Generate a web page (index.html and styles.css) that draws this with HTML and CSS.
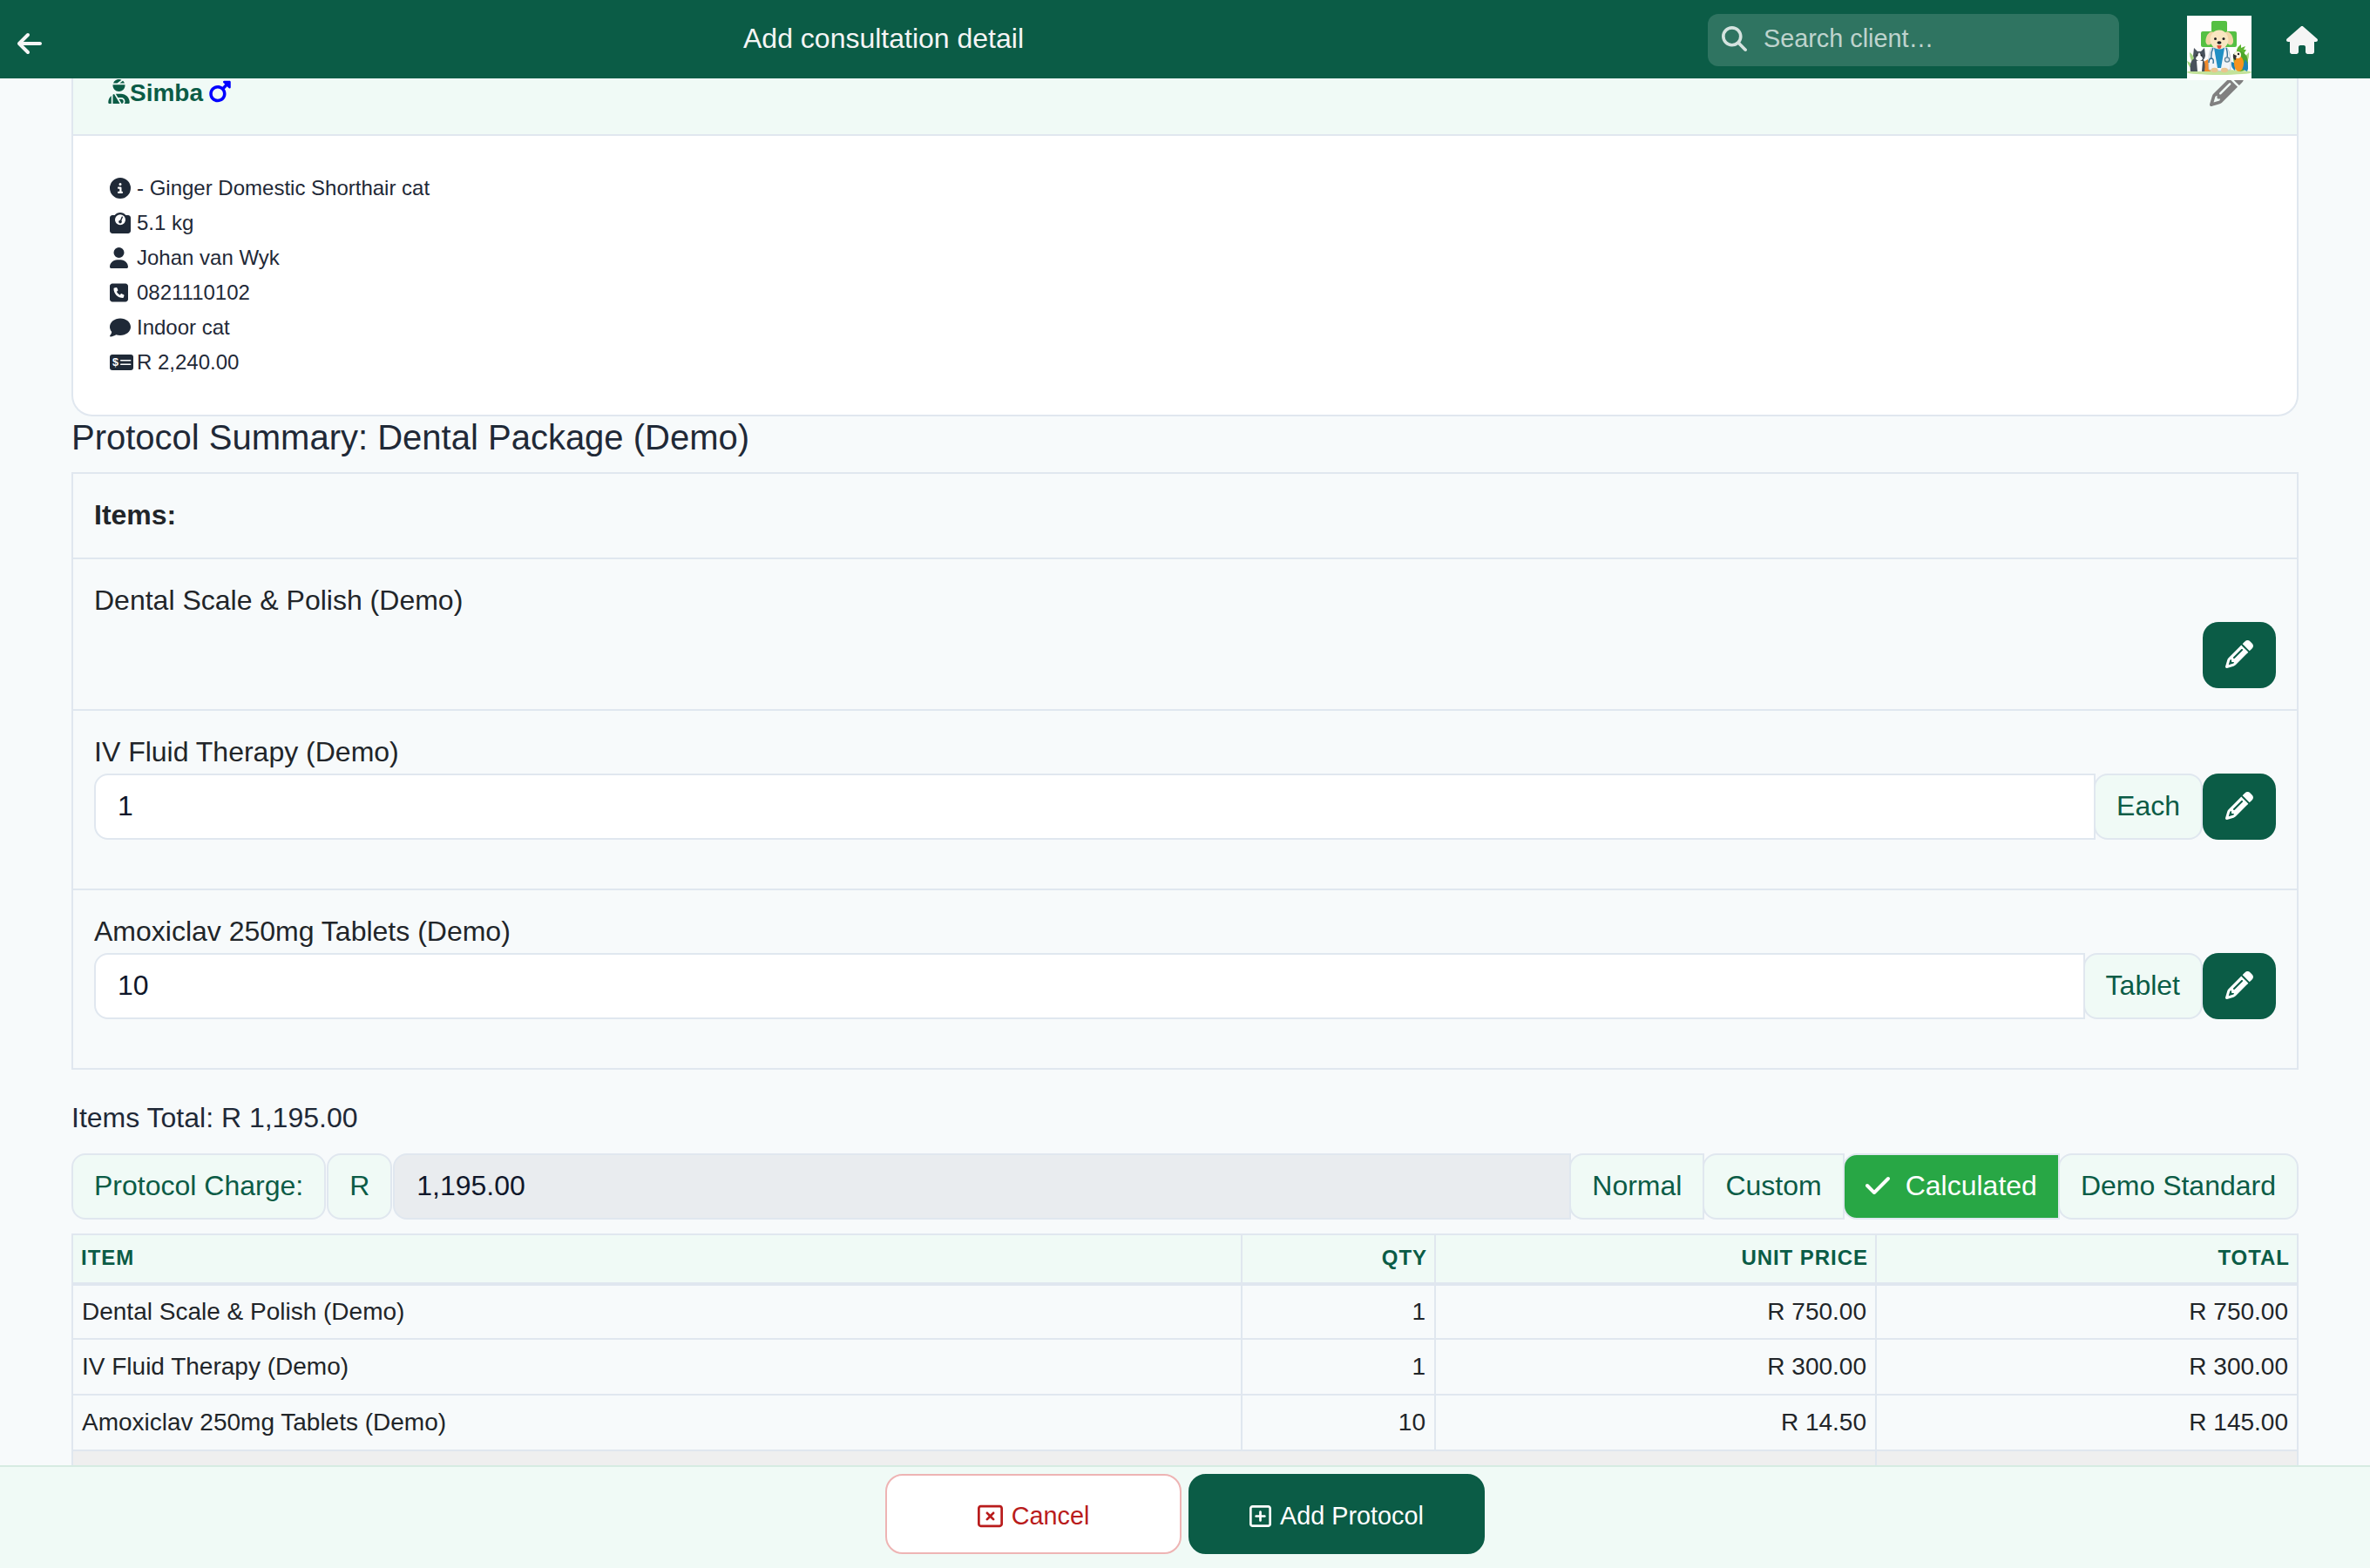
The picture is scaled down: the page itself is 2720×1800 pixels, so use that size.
FILE: index.html
```html
<!DOCTYPE html>
<html lang="en">
<head>
    <meta charset="UTF-8">
    <meta name="viewport" content="width=device-width, initial-scale=1.0">
    <title>Add consultation detail</title>
    <link rel="stylesheet" href="styles.css">
</head>
<body>
    <svg class="sprite" aria-hidden="true">
        <symbol id="pencil" viewBox="0 0 512 512">
            <path d="M410.3 231l11.3-11.3-33.9-33.9-62.1-62.1L291.7 89.8l-11.3 11.3-22.6 22.6L58.6 322.9c-10.4 10.4-18 23.3-22.2 37.4L1 480.7c-2.5 8.4-.2 17.5 6.1 23.7s15.3 8.5 23.7 6.1l120.3-35.4c14.1-4.2 27-11.8 37.4-22.2L387.7 253.7 410.3 231zM160 399.4l-9.1 22.7c-4 3.1-8.5 5.4-13.3 6.9L59.4 452l23-78.1c1.4-4.9 3.8-9.4 6.9-13.3l22.7-9.1 0 32c0 8.8 7.2 16 16 16l32 0zM362.7 18.7L348.3 33.2 325.7 55.8 314.3 67.1l33.9 33.9 62.1 62.1 33.9 33.9 11.3-11.3 22.6-22.6 14.5-14.5c25-25 25-65.5 0-90.5L453.3 18.7c-25-25-65.5-25-90.5 0zm-47.4 168l-144 144c-6.2 6.2-16.4 6.2-22.6 0s-6.2-16.4 0-22.6l144-144c6.2-6.2 16.4-6.2 22.6 0s6.2 16.4 0 22.6z"/>
        </symbol>
    </svg>

    <header class="topbar">
        <svg class="back" viewBox="0 0 448 512"><path d="M9.4 233.4c-12.5 12.5-12.5 32.8 0 45.3l160 160c12.5 12.5 32.8 12.5 45.3 0s12.5-32.8 0-45.3L109.2 288 416 288c17.7 0 32-14.3 32-32s-14.3-32-32-32l-306.7 0L214.6 118.6c12.5-12.5 12.5-32.8 0-45.3s-32.8-12.5-45.3 0l-160 160z"/></svg>
        <div class="title">Add consultation detail</div>
        <div class="search">
            <svg viewBox="0 0 512 512"><path d="M416 208c0 45.9-14.9 88.3-40 122.7L502.6 457.4c12.5 12.5 12.5 32.8 0 45.3s-32.8 12.5-45.3 0L330.7 376c-34.4 25.2-76.8 40-122.7 40C93.1 416 0 322.9 0 208S93.1 0 208 0S416 93.1 416 208zM208 352a144 144 0 1 0 0-288 144 144 0 1 0 0 288z"/></svg>
            <span>Search client…</span>
        </div>
        <svg class="logo" viewBox="0 0 74 74">
            <rect width="74" height="74" fill="#fefefe"/>
            <path d="M30 6h14q2 0 2 2v10h9q2 0 2 2v14q0 2-2 2H18q-2 0-2-2V20q0-2 2-2h10V8q0-2 2-2z" fill="#55c043"/>
            <ellipse cx="37" cy="65" rx="37" ry="3" fill="#c3e29a"/>
            <path d="M3 42q6 4 7 16-7-6-7-16zM0 52q6 2 8 10-6-2-8-10zM71 42q-6 5-6 15 7-5 6-15z" fill="#a5d67f"/>
            <path d="M19 53l5-3 3 14h-8z" fill="#f08a2c"/>
            <!-- cat -->
            <path d="M4 64q-2-14 7-16h6q5 5 3 16z" fill="#49525c"/>
            <path d="M8 37l4 4h4l4-4 1 9q-1 6-7 6t-7-6z" fill="#49525c"/>
            <path d="M14 42l4 7q-1 3-4 3t-4-3zM11 52h7l-1 12h-5z" fill="#fff"/>
            <circle cx="11.5" cy="45.500" r="1" fill="#222"/><circle cx="16.500" cy="45.500" r="1" fill="#222"/>
            <!-- dog in a white coat -->
            <path d="M28 37q9-2 18 0 5 6 4 25-13 3-25 0-1-19 3-25z" fill="#f0f4f7" stroke="#b3c0ca" stroke-width=".8"/>
            <path d="M31 37h12l-4 23h-4z" fill="#1f8fc4"/>
            <path d="M30 37q-3 6-2 13M25 54q0-5 3-5t2 6M45 37q2 6 1 11" fill="none" stroke="#2f6f98" stroke-width="1.4"/>
            <circle cx="46" cy="50.500" r="2.600" fill="#dfe8ee" stroke="#5f8298" stroke-width="1.2"/>
            <ellipse cx="31.500" cy="62.500" rx="4" ry="2.800" fill="#e9c48e"/><ellipse cx="43" cy="62.500" rx="4" ry="2.800" fill="#e9c48e"/>
            <ellipse cx="26.500" cy="26" rx="4.500" ry="8" fill="#f1d5a6" transform="rotate(22 26.500 26)"/>
            <ellipse cx="48" cy="26" rx="4.500" ry="8" fill="#f1d5a6" transform="rotate(-22 48 26)"/>
            <ellipse cx="37" cy="27.500" rx="10.500" ry="11" fill="#f9e6c1"/>
            <circle cx="32.500" cy="26.500" r="1.500" fill="#222"/><circle cx="42" cy="26.500" r="1.500" fill="#222"/>
            <ellipse cx="37" cy="31" rx="2.500" ry="1.800" fill="#222"/>
            <path d="M34.500 34h5q0 4-2.500 4t-2.500-4z" fill="#e5533f"/>
            <!-- parrot -->
            <path d="M57 41q0-5 5-8l0 4 5-2-2 4 3 0-3 5z" fill="#5cb531"/>
            <path d="M53 45q3-6 9-4 8 3 8 13 0 9-9 10-8-3-8-19z" fill="#4ba62b"/>
            <path d="M67 50q5 7 2 14l-6-3z" fill="#1d83b5"/>
            <path d="M51 53q-1 7 4 10l2-8z" fill="#1d83b5"/>
            <ellipse cx="59.500" cy="55" rx="5.500" ry="9" fill="#f6931e"/>
            <circle cx="58" cy="45" r="4" fill="#fdf3e2"/><circle cx="59" cy="44" r="1.200" fill="#222"/>
            <path d="M53 44q-1 6 3 7 0-3 1-5z" fill="#333"/>
        </svg>
        <svg class="home" viewBox="0 0 576 512"><path d="M575.8 255.5c0 18-15 32.1-32 32.1l-32 0 .7 160.2c0 2.7-.2 5.4-.5 8.1l0 16.2c0 22.1-17.9 40-40 40l-16 0c-1.1 0-2.2 0-3.3-.1c-1.4 .1-2.8 .1-4.2 .1L416 512l-24 0c-22.1 0-40-17.9-40-40l0-24 0-64c0-17.7-14.3-32-32-32l-64 0c-17.7 0-32 14.3-32 32l0 64 0 24c0 22.1-17.9 40-40 40l-24 0-31.9 0c-1.5 0-3-.1-4.5-.2c-1.2 .1-2.4 .2-3.6 .2l-16 0c-22.1 0-40-17.9-40-40l0-112c0-.9 0-1.9 .1-2.8l0-69.7-32 0c-18 0-32-14-32-32.1c0-9 3-17 10-24L266.4 8c7-7 15-8 22-8s15 2 21 7L564.8 231.5c8 7 12 15 11 24z"/></svg>
    </header>

    <main class="page">
        <section class="card">
            <div class="card-header">
                <svg class="w-448" viewBox="0 0 448 512"><path d="M240 80l102.7 0c-7.9-19.5-20.4-36.5-36.2-49.9L240 80zm37.7-68.2C261.3 4.2 243.2 0 224 0c-53.7 0-99.7 33.1-118.7 80l81.4 0 91-68.2zM224 256c70.7 0 128-57.3 128-128c0-5.4-.3-10.8-1-16L97 112c-.7 5.2-1 10.6-1 16c0 70.7 57.3 128 128 128zM124 312.4c-9.7 3.1-19.1 7-28 11.7L96 512l147.7 0L181.5 408.2 124 312.4zm33-7.2L204.3 384l67.7 0c44.2 0 80 35.8 80 80c0 18-6 34.6-16 48l82.3 0c16.4 0 29.7-13.3 29.7-29.7C448 383.8 368.2 304 269.7 304l-91.4 0c-7.2 0-14.3 .4-21.3 1.3zM0 482.3C0 498.7 13.3 512 29.7 512L64 512l0-166.6C24.9 378.1 0 427.3 0 482.3zM320 464c0-26.5-21.5-48-48-48l-48.5 0 57.1 95.2C303 507.2 320 487.6 320 464z"/></svg>
                <span>Simba</span>
                <svg class="w-448 male" viewBox="0 0 448 512"><path d="M289.8 46.8c3.7-9 12.5-14.8 22.2-14.8l112 0c13.3 0 24 10.7 24 24l0 112c0 9.7-5.8 18.5-14.8 22.2s-19.3 1.7-26.2-5.2l-33.4-33.4L321 204.2c19.5 28.4 31 62.7 31 99.8c0 97.2-78.8 176-176 176S0 401.2 0 304s78.8-176 176-176c37 0 71.4 11.4 99.8 31l52.6-52.6L295 73c-6.9-6.9-8.9-17.2-5.2-26.2zM176 416a112 112 0 1 0 0-224 112 112 0 1 0 0 224z"/></svg>
                <svg class="edit"><use href="#pencil"/></svg>
            </div>
            <ul class="info">
                <li><svg viewBox="0 0 640 512"><path d="M256 512A256 256 0 1 0 256 0a256 256 0 1 0 0 512zM216 336l24 0 0-64-24 0c-13.3 0-24-10.7-24-24s10.7-24 24-24l48 0c13.3 0 24 10.7 24 24l0 88 8 0c13.3 0 24 10.7 24 24s-10.7 24-24 24l-80 0c-13.3 0-24-10.7-24-24s10.7-24 24-24zm40-208a32 32 0 1 1 0 64 32 32 0 1 1 0-64z"/></svg>- Ginger Domestic Shorthair cat</li>
                <li><svg viewBox="0 0 640 512"><path d="M128 176a128 128 0 1 1 256 0 128 128 0 1 1 -256 0zM391.8 64C359.5 24.9 310.7 0 256 0S152.5 24.9 120.2 64L64 64C28.7 64 0 92.7 0 128L0 448c0 35.3 28.7 64 64 64l384 0c35.3 0 64-28.7 64-64l0-320c0-35.3-28.7-64-64-64l-56.2 0zM296 224c0-10.6-4.1-20.2-10.9-27.4l33.6-78.3c3.5-8.1-.3-17.5-8.4-21s-17.5 .3-21 8.4L255.7 184c-22 .1-39.7 18-39.7 40c0 22.1 17.9 40 40 40s40-17.9 40-40z"/></svg>5.1 kg</li>
                <li><svg viewBox="0 0 640 512"><path d="M224 256A128 128 0 1 0 224 0a128 128 0 1 0 0 256zm-45.7 48C79.8 304 0 383.8 0 482.3C0 498.7 13.3 512 29.7 512l388.6 0c16.4 0 29.7-13.3 29.7-29.7C448 383.8 368.2 304 269.7 304l-91.4 0z"/></svg>Johan van Wyk</li>
                <li><svg viewBox="0 0 640 512"><path d="M64 32C28.7 32 0 60.7 0 96L0 416c0 35.3 28.7 64 64 64l320 0c35.3 0 64-28.7 64-64l0-320c0-35.3-28.7-64-64-64L64 32zm90.7 96.7c9.7-2.6 19.9 2.3 23.7 11.6l20 48c3.4 8.2 1 17.6-5.8 23.2L168 231.7c16.6 35.2 45.1 63.7 80.3 80.3l20.2-24.7c5.6-6.8 15-9.2 23.2-5.8l48 20c9.3 3.9 14.2 14 11.6 23.7l-12 44C336.9 378 329 384 320 384C196.3 384 96 283.7 96 160c0-9 6-16.9 14.7-19.3l44-12z"/></svg>0821110102</li>
                <li><svg viewBox="0 0 640 512"><path d="M512 240c0 114.9-114.6 208-256 208c-37.1 0-72.3-6.4-104.1-17.9c-11.9 8.7-31.3 20.6-54.3 30.6C73.6 471.1 44.7 480 16 480c-6.5 0-12.3-3.9-14.8-9.9c-2.5-6-1.1-12.8 3.4-17.4l.3-.3c.3-.3 .7-.7 1.3-1.4c1.1-1.2 2.8-3.1 4.9-5.7c4.1-5 9.6-12.4 15.2-21.6c10-16.6 19.5-38.4 21.4-62.9C17.7 326.8 0 285.1 0 240C0 125.1 114.6 32 256 32s256 93.1 256 208z"/></svg>Indoor cat</li>
                <li><svg viewBox="0 0 640 512"><rect y="64" width="576" height="384" rx="64"/><path d="M272 208h232M272 304h232" fill="none" stroke="#fff" stroke-width="34" stroke-linecap="round"/><text class="dollar" x="62" y="350">$</text></svg>R 2,240.00</li>
            </ul>
        </section>

        <h4>Protocol Summary: Dental Package (Demo)</h4>

        <div class="items">
            <div class="item"><div class="name"><b>Items:</b></div></div>
            <div class="item">
                <div class="name">Dental Scale &amp; Polish (Demo)</div>
                <div class="group end"><button class="btn-edit"><svg><use href="#pencil"/></svg></button></div>
            </div>
            <div class="item spaced">
                <div class="name">IV Fluid Therapy (Demo)</div>
                <div class="group">
                    <div class="field">1</div>
                    <div class="addon">Each</div>
                    <button class="btn-edit"><svg><use href="#pencil"/></svg></button>
                </div>
            </div>
            <div class="item spaced">
                <div class="name">Amoxiclav 250mg Tablets (Demo)</div>
                <div class="group">
                    <div class="field">10</div>
                    <div class="addon">Tablet</div>
                    <button class="btn-edit"><svg><use href="#pencil"/></svg></button>
                </div>
            </div>
        </div>

        <div class="items-total">Items Total: R 1,195.00</div>

        <div class="group charge">
            <div class="addon lead">Protocol Charge:</div>
            <div class="addon lead">R</div>
            <div class="field disabled">1,195.00</div>
            <div class="addon flat">Normal</div>
            <div class="addon flat">Custom</div>
            <div class="addon flat active"><svg viewBox="0 0 448 512"><path d="M438.6 105.4c12.5 12.5 12.5 32.8 0 45.3l-256 256c-12.5 12.5-32.8 12.5-45.3 0l-128-128c-12.5-12.5-12.5-32.8 0-45.3s32.8-12.5 45.3 0L160 338.7 393.4 105.4c12.5-12.5 32.8-12.5 45.3 0z"/></svg>Calculated</div>
            <div class="addon">Demo Standard</div>
        </div>

        <table>
            <thead>
                <tr><th class="c-item">Item</th><th class="c-qty">Qty</th><th class="c-price">Unit Price</th><th>Total</th></tr>
            </thead>
            <tbody>
                <tr class="first"><td>Dental Scale &amp; Polish (Demo)</td><td>1</td><td>R 750.00</td><td>R 750.00</td></tr>
                <tr><td>IV Fluid Therapy (Demo)</td><td>1</td><td>R 300.00</td><td>R 300.00</td></tr>
                <tr><td>Amoxiclav 250mg Tablets (Demo)</td><td>10</td><td>R 14.50</td><td>R 145.00</td></tr>
                <tr class="sum"><td colspan="3"></td><td></td></tr>
            </tbody>
        </table>
    </main>

    <footer class="actions">
        <button class="btn cancel"><svg viewBox="0 0 512 512"><path d="M64 80c-8.8 0-16 7.2-16 16l0 320c0 8.8 7.2 16 16 16l384 0c8.8 0 16-7.2 16-16l0-320c0-8.8-7.2-16-16-16L64 80zM0 96C0 60.7 28.7 32 64 32l384 0c35.3 0 64 28.7 64 64l0 320c0 35.3-28.7 64-64 64L64 480c-35.3 0-64-28.7-64-64L0 96zm175 79c9.4-9.4 24.6-9.4 33.9 0l47 47 47-47c9.4-9.4 24.6-9.4 33.9 0s9.4 24.6 0 33.9l-47 47 47 47c9.4 9.4 9.4 24.6 0 33.9s-24.6 9.4-33.9 0l-47-47-47 47c-9.4 9.4-24.6 9.4-33.9 0s-9.4-24.6 0-33.9l47-47-47-47c-9.4-9.4-9.4-24.6 0-33.9z"/></svg>Cancel</button>
        <button class="btn add"><svg class="narrow" viewBox="0 0 448 512"><path d="M64 80c-8.8 0-16 7.2-16 16l0 320c0 8.8 7.2 16 16 16l320 0c8.8 0 16-7.2 16-16l0-320c0-8.8-7.2-16-16-16L64 80zM0 96C0 60.7 28.7 32 64 32l320 0c35.3 0 64 28.7 64 64l0 320c0 35.3-28.7 64-64 64L64 480c-35.3 0-64-28.7-64-64L0 96zM200 344l0-64-64 0c-13.3 0-24-10.7-24-24s10.7-24 24-24l64 0 0-64c0-13.3 10.7-24 24-24s24 10.7 24 24l0 64 64 0c13.3 0 24 10.7 24 24s-10.7 24-24 24l-64 0 0 64c0 13.3-10.7 24-24 24s-24-10.7-24-24z"/></svg>Add Protocol</button>
    </footer>
</body>
</html>
```

FILE: styles.css
```css
* {
    box-sizing: border-box;
}
body {
    margin: 0;
    height: 1800px;
    overflow: hidden;
    background-color: #f7fafb;
    color: #212529;
    font-family: Arial, "Liberation Sans", sans-serif;
    font-size: 32px;
    line-height: 48px;
}
svg {
    display: block;
    flex: none;
    fill: currentColor;
}
.sprite {
    position: absolute;
    width: 0;
    height: 0;
}
button {
    font-family: inherit;
    margin: 0;
    padding: 0;
}

/* top bar */
.topbar {
    position: fixed;
    top: 0;
    left: 0;
    right: 0;
    z-index: 10;
    height: 90px;
    display: flex;
    align-items: flex-start;
    padding-left: 20px;
    background-color: #0b5c46;
    color: #f5f5f5;
}
.back {
    width: 28px;
    height: 32px;
    margin-top: 34px;
}
.title {
    width: 1107px;
    margin-left: 805px;
    padding-top: 20px;
}
.search {
    width: 472px;
    height: 60px;
    margin-top: 16px;
    padding: 0 16px 4px;
    display: flex;
    align-items: center;
    gap: 19px;
    border-radius: 12px;
    background-color: rgba(255, 255, 255, 0.15);
    color: rgba(255, 255, 255, 0.7);
    font-size: 28.8px;
}
.search svg {
    width: 29px;
    height: 29px;
    color: rgba(255, 255, 255, 0.8);
}
.logo {
    width: 74px;
    height: 74px;
    margin: 18px 0 0 78px;
}
.home {
    width: 36px;
    height: 32px;
    margin: 30px 0 0 40px;
}

.page {
    padding: 0 82px;
}

/* patient card */
.card {
    height: 478px;
    padding-top: 60px;
    border: 2px solid #e0e7ef;
    border-top: 0;
    border-radius: 24px;
    background-color: #fff;
    color: #1f2937;
}
.card-header {
    height: 96px;
    padding: 20px 61px 0 40px;
    display: flex;
    border-bottom: 2px solid #e0e7ef;
    background-color: #f0faf6;
    color: #0b5c46;
    font-size: 28px;
    font-weight: bold;
    line-height: 53px;
}
.w-448 {
    width: 25px;
    height: 28px;
    margin-top: 11px;
}
.male {
    margin-left: 7px;
    color: #00f;
}
.edit {
    width: 39px;
    height: 39px;
    margin: 3px 0 0 auto;
    color: #808080;
}
.info {
    list-style: none;
    margin: 0;
    padding: 40px 42px;
    font-size: 24px;
    line-height: 40px;
}
.info li {
    display: flex;
    align-items: center;
}
.info svg {
    width: 30px;
    height: 24px;
    margin-right: 1px;
}
.dollar {
    fill: #fff;
    font-size: 270px;
    font-weight: bold;
}

h4 {
    margin: 0 0 16px;
    color: #1f2937;
    font-size: 40px;
    font-weight: normal;
    line-height: 48px;
}

/* protocol items */
.items {
    border: 2px solid #e0e7ef;
}
.item {
    padding: 24px;
}
.item + .item {
    border-top: 2px solid #e0e7ef;
}
.name {
    padding-bottom: 2px;
    line-height: 46px;
}
.spaced {
    padding-bottom: 56px;
}
.group {
    display: flex;
}
.end {
    justify-content: flex-end;
}
.field {
    flex: 1;
    padding: 11px 25px 13px;
    border: 2px solid #e0e7ef;
    border-radius: 16px 0 0 16px;
    background-color: #fff;
    color: #0f172a;
}
.disabled {
    background-color: #e9ecef;
}
.addon {
    display: flex;
    margin-left: -2px;
    padding: 11px 24px 13px;
    border: 2px solid #e0e7ef;
    border-radius: 16px;
    background-color: #f0faf6;
    color: #0b5c46;
}
.btn-edit {
    display: flex;
    align-items: center;
    justify-content: center;
    width: 84px;
    height: 76px;
    padding-bottom: 3px;
    border: 0;
    border-radius: 18px;
    background-color: #0b5c46;
    color: #fff;
}
.btn-edit svg {
    width: 32px;
    height: 32px;
}
.items-total {
    margin: 36px 0 22px;
    color: #1f2937;
    line-height: 38px;
}
.charge {
    margin-bottom: 16px;
}
.charge .lead {
    margin: 0 1px 0 0;
}
.charge .flat {
    border-radius: 16px 0 0 16px;
}
.charge .active {
    background-color: #28a745;
    color: #fff;
}
.active svg {
    width: 28px;
    height: 32px;
    margin: 8px 18px 0 0;
}

/* summary table */
table {
    width: 100%;
    table-layout: fixed;
    border-collapse: separate;
    border-spacing: 0;
    border: 2px solid #e0e7ef;
    border-width: 2px 0 0 2px;
    font-size: 28px;
    line-height: 42px;
}
th, td {
    padding: 0 10px 1px;
    border: 2px solid #e0e7ef;
    border-width: 0 2px 2px 0;
    text-align: right;
    height: 64px;
}
th:first-child, td:first-child {
    text-align: left;
}
th {
    height: 58px;
    padding: 0 8px 3px 9px;
    border-bottom-width: 4px;
    background-color: #f0faf6;
    color: #0b5c46;
    font-size: 24px;
    letter-spacing: 0.96px;
    text-transform: uppercase;
}
.first td {
    height: 62px;
    padding-bottom: 0;
}
.sum td {
    background-color: #efefef;
}
.c-item {
    width: 1342px;
}
.c-qty {
    width: 222px;
}
.c-price {
    width: 506px;
}

/* bottom buttons */
.actions {
    position: fixed;
    left: 0;
    right: 0;
    bottom: 0;
    height: 118px;
    display: flex;
    justify-content: center;
    gap: 8px;
    padding-top: 8px;
    border-top: 2px solid #d6ebe2;
    background-color: #f0faf6;
}
.btn {
    display: flex;
    align-items: center;
    justify-content: center;
    gap: 10px;
    width: 340px;
    height: 92px;
    padding-top: 4px;
    border: 2px solid #0b5c46;
    border-radius: 20px;
    background-color: #0b5c46;
    color: #fff;
    font-size: 28.8px;
}
.btn svg {
    width: 29px;
    height: 29px;
}
.btn .narrow {
    width: 25px;
}
.cancel {
    border-color: #eeb4b4;
    background-color: #fff;
    color: #b91c1c;
}
```
